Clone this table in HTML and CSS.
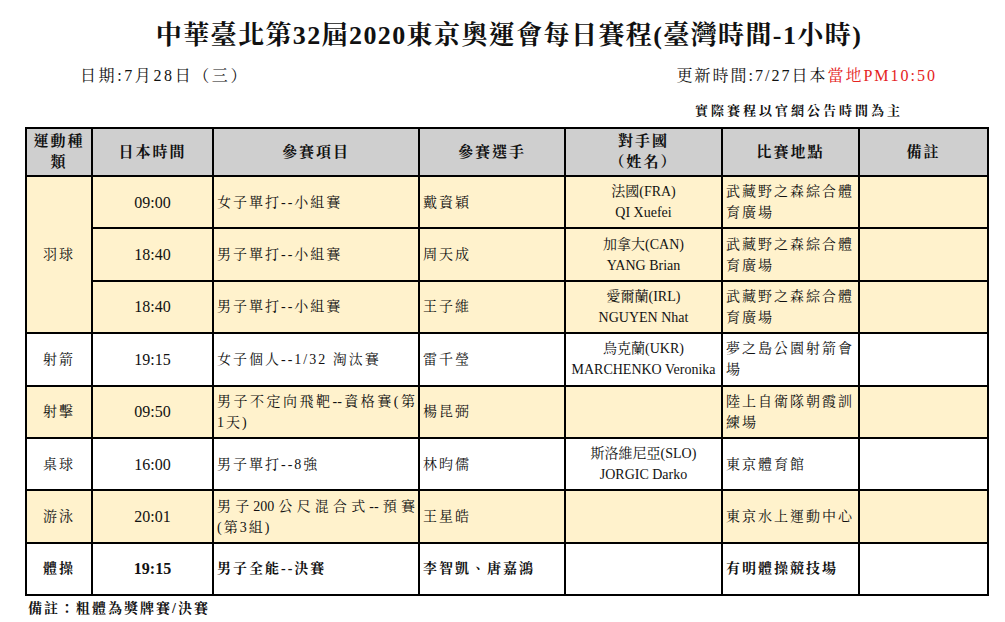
FILE: index.html
```html
<!DOCTYPE html>
<html lang="zh-Hant">
<head>
<meta charset="utf-8">
<title>中華臺北第32屆2020東京奧運會每日賽程</title>
<link rel="stylesheet" href="styles.css">
</head>
<body>
<div class="page">
  <h1 class="title">中華臺北第32屆2020東京奧運會每日賽程(臺灣時間-1小時)</h1>
  <div class="meta">
    <div class="date">日期:7月28日（三）</div>
    <div class="update">更新時間:7/27日本<span class="red">當地PM10:50</span></div>
  </div>
  <div class="note-row"><span class="note">實際賽程以官網公告時間為主</span></div>
  <table class="sched">
    <colgroup>
      <col class="c1"><col class="c2"><col class="c3"><col class="c4"><col class="c5"><col class="c6"><col class="c7">
    </colgroup>
    <thead>
      <tr>
        <th>運動種類</th>
        <th>日本時間</th>
        <th>參賽項目</th>
        <th>參賽選手</th>
        <th>對手國<br>（姓名）</th>
        <th>比賽地點</th>
        <th>備註</th>
      </tr>
    </thead>
    <tbody>
      <tr class="y">
        <td class="sport" rowspan="3">羽球</td>
        <td class="time">09:00</td>
        <td class="ev">女子單打--小組賽</td>
        <td class="ath">戴資穎</td>
        <td class="opp">法國(FRA)<br>QI Xuefei</td>
        <td class="ven">武藏野之森綜合體育廣場</td>
        <td></td>
      </tr>
      <tr class="y">
        <td class="time">18:40</td>
        <td class="ev">男子單打--小組賽</td>
        <td class="ath">周天成</td>
        <td class="opp">加拿大(CAN)<br>YANG Brian</td>
        <td class="ven">武藏野之森綜合體育廣場</td>
        <td></td>
      </tr>
      <tr class="y">
        <td class="time">18:40</td>
        <td class="ev">男子單打--小組賽</td>
        <td class="ath">王子維</td>
        <td class="opp">愛爾蘭(IRL)<br>NGUYEN Nhat</td>
        <td class="ven">武藏野之森綜合體育廣場</td>
        <td></td>
      </tr>
      <tr>
        <td class="sport">射箭</td>
        <td class="time">19:15</td>
        <td class="ev">女子個人--1/32 淘汰賽</td>
        <td class="ath">雷千瑩</td>
        <td class="opp">烏克蘭(UKR)<br>MARCHENKO Veronika</td>
        <td class="ven">夢之島公園射箭會場</td>
        <td></td>
      </tr>
      <tr class="y">
        <td class="sport">射擊</td>
        <td class="time">09:50</td>
        <td class="ev"><span class="dist">男子不定向飛靶--資格賽(第</span>1天)</td>
        <td class="ath">楊昆弼</td>
        <td class="opp"></td>
        <td class="ven">陸上自衛隊朝霞訓練場</td>
        <td></td>
      </tr>
      <tr>
        <td class="sport">桌球</td>
        <td class="time">16:00</td>
        <td class="ev">男子單打--8強</td>
        <td class="ath">林昀儒</td>
        <td class="opp">斯洛維尼亞(SLO)<br>JORGIC Darko</td>
        <td class="ven">東京體育館</td>
        <td></td>
      </tr>
      <tr class="y">
        <td class="sport">游泳</td>
        <td class="time">20:01</td>
        <td class="ev"><span class="dist">男子200公尺混合式--預賽</span>(第3組)</td>
        <td class="ath">王星皓</td>
        <td class="opp"></td>
        <td class="ven">東京水上運動中心</td>
        <td></td>
      </tr>
      <tr class="b">
        <td class="sport">體操</td>
        <td class="time">19:15</td>
        <td class="ev">男子全能--決賽</td>
        <td class="ath">李智凱、唐嘉鴻</td>
        <td class="opp"></td>
        <td class="ven">有明體操競技場</td>
        <td></td>
      </tr>
    </tbody>
  </table>
  <div class="foot">備註：粗體為獎牌賽/決賽</div>
</div>
</body>
</html>
```

FILE: styles.css
```css
* { box-sizing: border-box; }

html, body {
  margin: 0;
  padding: 0;
  background: #ffffff;
}

body {
  width: 1005px;
  height: 622px;
  overflow: hidden;
  color: #111;
  font-family: "Liberation Serif", "Noto Serif CJK TC", "Noto Sans CJK TC", serif;
}

.page {
  padding: 0 0 0 25px;
}

.title {
  margin: 0;
  padding-top: 21px;
  height: 57px;
  width: 962px;
  text-align: center;
  font-size: 26px;
  line-height: 30px;
  font-weight: bold;
  letter-spacing: 1.4px;
  padding-left: 6px;
}

.meta {
  width: 962px;
  display: flex;
  justify-content: space-between;
  align-items: center;
  height: 34px;
  font-size: 16px;
}

.date {
  padding-left: 55px;
  letter-spacing: 2.6px;
}

.update {
  padding-right: 50px;
  letter-spacing: 2px;
}

.red { color: #e52222; }

.note-row {
  width: 962px;
  height: 36px;
  display: flex;
  justify-content: flex-end;
  align-items: center;
  padding-right: 84px;
}

.note {
  font-size: 13px;
  font-weight: bold;
  letter-spacing: 3px;
}

.sched {
  border-collapse: collapse;
  table-layout: fixed;
  width: 962px;
  font-size: 14px;
}

.c1 { width: 66px; }
.c2 { width: 121px; }
.c3 { width: 206px; }
.c4 { width: 146px; }
.c5 { width: 157px; }
.c6 { width: 137px; }
.c7 { width: 129px; }

.sched th,
.sched td {
  border: 2px solid #000;
  padding: 0 3px;
  vertical-align: middle;
  overflow: hidden;
}

.sched th {
  background: #cfcfcf;
  height: 48px;
  font-size: 15px;
  font-weight: bold;
  letter-spacing: 2px;
  line-height: 21px;
  text-align: center;
}

.sched td {
  height: 52.4px;
  line-height: 21px;
}

.sched tr.y td { background: #fff2cc; }

.sport {
  text-align: center;
  letter-spacing: 2px;
}

.time {
  text-align: center;
  font-size: 16px;
}

.ev {
  letter-spacing: 2px;
}

.ath {
  letter-spacing: 2px;
}

.sched td.opp {
  text-align: center;
  letter-spacing: 0;
  white-space: nowrap;
  padding: 0 1px;
}

.ven {
  letter-spacing: 2px;
}

.dist {
  display: block;
  text-align: justify;
  text-align-last: justify;
  letter-spacing: 0;
}

.sched tr.b td {
  font-weight: bold;
}

.foot {
  margin-top: 1px;
  font-size: 14px;
  font-weight: bold;
  letter-spacing: 2px;
  padding-left: 3px;
}
```
